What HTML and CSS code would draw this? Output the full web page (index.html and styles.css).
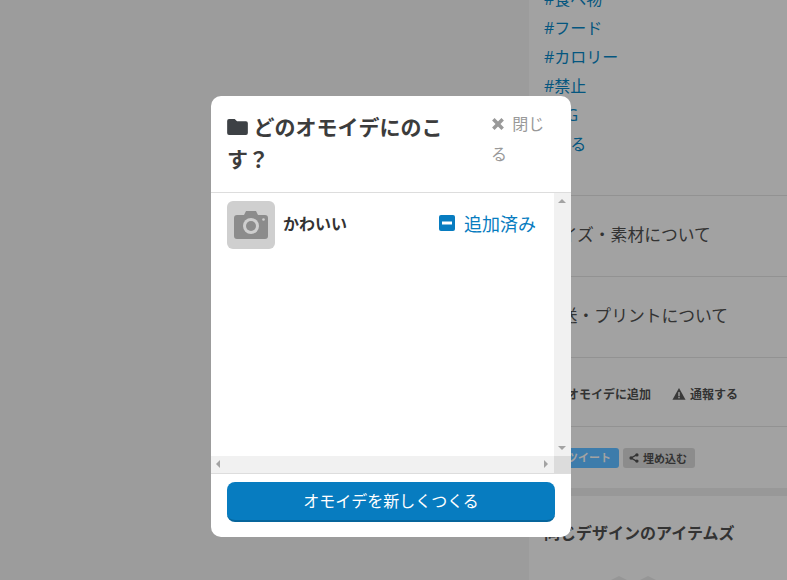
FILE: index.html
```html
<!DOCTYPE html>
<html lang="ja">
<head>
    <meta charset="UTF-8">
    <title>オモイデ</title>
    <link rel="stylesheet" href="styles.css">
</head>
<body>
    <div class="page">
        <div class="main"></div>
        <aside class="side">
            <ul class="tags">
                <li>#食べ物</li>
                <li>#フード</li>
                <li>#カロリー</li>
                <li>#禁止</li>
                <li>#NG</li>
                <li>#見る</li>
            </ul>
            <div class="side-row">サイズ・素材について</div>
            <div class="side-row">配送・プリントについて</div>
            <div class="side-actions">
                <span>オモイデに追加</span>
                <span class="report">
                    <svg class="report-icon" viewBox="0 0 16 16"><path d="M8 1.2 15.5 14.600H.5Z" fill="#3a3a3a"/><rect x="7.200" y="5.800" width="1.600" height="4.600" fill="#a1a1a1"/><rect x="7.200" y="11.200" width="1.600" height="1.700" fill="#a1a1a1"/></svg>
                    通報する
                </span>
            </div>
            <div class="side-share">
                <span class="tweet">ツイート</span>
                <span class="embed">
                    <svg class="embed-icon" viewBox="0 0 12 12"><path d="M9.500 2 2.500 6l7 4" fill="none" stroke="#333" stroke-width="1.500"/><circle cx="9.500" cy="2.300" r="2" fill="#333"/><circle cx="2.500" cy="6" r="2" fill="#333"/><circle cx="9.500" cy="9.700" r="2" fill="#333"/></svg>
                    埋め込む
                </span>
            </div>
            <div class="side-band"></div>
            <h3 class="side-title">同じデザインのアイテムズ</h3>
            <svg class="side-peek" viewBox="0 0 49 4"><path d="M0 4 8 0l8 4ZM29 4l8-4 8 4Z" fill="#969696"/></svg>
        </aside>
    </div>

    <div class="overlay">
        <div class="modal">
            <div class="modal-head">
                <h2 class="modal-title">
                    <svg class="folder" viewBox="0 0 22 17"><path d="M2 0h6l2.500 2.500H20a2 2 0 0 1 2 2V15a2 2 0 0 1-2 2H2a2 2 0 0 1-2-2V2a2 2 0 0 1 2-2Z" fill="#3d4145"/></svg>
                    どのオモイデにのこす？
                </h2>
                <div class="close">
                    <svg class="close-x" viewBox="0 0 12 12"><path d="M2 2l8 8M10 2l-8 8" fill="none" stroke="#999" stroke-width="3"/></svg>
                    閉じる
                </div>
            </div>
            <div class="modal-list">
                <div class="list-inner">
                    <div class="list-item">
                        <div class="thumb">
                            <svg class="camera" viewBox="0 0 34 28"><path d="M3 4h7l2-4h10l2 4h7a3 3 0 0 1 3 3v18a3 3 0 0 1-3 3H3a3 3 0 0 1-3-3V7a3 3 0 0 1 3-3Z" fill="#8c8c8c"/><circle cx="17" cy="15" r="8" fill="#cfcfcf"/><circle cx="17" cy="15" r="5" fill="#8c8c8c"/><circle cx="29.500" cy="8.500" r="1.300" fill="#cfcfcf"/></svg>
                        </div>
                        <span class="item-name">かわいい</span>
                        <span class="item-state">
                            <svg class="minus" viewBox="0 0 16 16"><rect width="16" height="16" rx="2" fill="#077cc0"/><rect x="3" y="6.500" width="10" height="3" fill="#fff"/></svg>
                            追加済み
                        </span>
                    </div>
                </div>
                <div class="scroll-v">
                    <span class="arrow arrow-up"></span>
                    <span class="arrow arrow-down"></span>
                </div>
                <div class="scroll-h">
                    <span class="arrow arrow-left"></span>
                    <span class="arrow arrow-right"></span>
                </div>
                <div class="scroll-corner"></div>
            </div>
            <div class="modal-foot">
                <button class="create-btn">オモイデを新しくつくる</button>
            </div>
        </div>
    </div>
</body>
</html>
```

FILE: styles.css
```css
html, body {
    margin: 0;
    padding: 0;
    height: 100%;
    overflow: hidden;
}

body {
    font-family: "Open Sans", "Noto Sans CJK JP", sans-serif;
    color: #333;
    background-color: #9c9c9c;
}

.page {
    display: flex;
    height: 580px;
    overflow: hidden;
}

.main {
    width: 529px;
    flex-shrink: 0;
}

.side {
    flex: 1;
    background-color: #a2a2a2;
}

.tags {
    list-style: none;
    margin: -15px 0 0;
    padding: 0 0 36px 15px;
    font-size: 16px;
    line-height: 29px;
    color: #04567f;
}

.side-row {
    border-top: 1px solid #929292;
    height: 80px;
    line-height: 78px;
    padding-left: 15px;
    font-size: 16.800px;
}

.side-actions {
    border-top: 1px solid #929292;
    height: 69px;
    display: flex;
    align-items: center;
    gap: 21px;
    padding: 3px 0 0 38px;
    box-sizing: border-box;
    font-size: 12px;
    font-weight: bold;
}

.report {
    display: flex;
    align-items: center;
    gap: 4px;
}

.report-icon {
    width: 14px;
    height: 14px;
}

.side-share {
    border-top: 1px solid #929292;
    height: 61px;
    display: flex;
    align-items: center;
    gap: 4px;
    padding-left: 15px;
    font-size: 11px;
    font-weight: bold;
}

.tweet {
    width: 75px;
    height: 20px;
    line-height: 20px;
    text-align: right;
    padding-right: 8px;
    box-sizing: border-box;
    border-radius: 3px;
    background-color: #3d7cab;
    color: #a2a2a2;
}

.embed {
    display: flex;
    align-items: center;
    gap: 4px;
    height: 20px;
    padding: 0 8px 0 6px;
    border-radius: 3px;
    background-color: #8c8c8c;
}

.embed-icon {
    width: 10px;
    height: 10px;
}

.side-band {
    height: 8px;
    background-color: #989898;
}

.side-title {
    margin: 0;
    padding: 25px 0 0 15px;
    font-size: 16px;
    line-height: 24px;
}

.side-peek {
    display: block;
    width: 49px;
    height: 4px;
    margin: 31px 0 0 82px;
}

.overlay {
    position: absolute;
    left: 211px;
    top: 96px;
}

.modal {
    width: 360px;
    height: 441px;
    display: flex;
    flex-direction: column;
    background-color: #fff;
    border-radius: 10px;
    overflow: hidden;
}

.modal-head {
    height: 96px;
    display: flex;
    justify-content: space-between;
    border-bottom: 1px solid #ddd;
    flex-shrink: 0;
}

.modal-title {
    width: 230px;
    margin: 15px 0 0 16px;
    font-size: 21px;
    line-height: 32px;
    font-weight: bold;
    color: #3c3c3c;
}

.folder {
    width: 21px;
    height: 16px;
}

.close {
    width: 64px;
    margin: 13px 16px 0 0;
    font-size: 16px;
    line-height: 30px;
    color: #999;
}

.close-x {
    width: 14px;
    height: 14px;
    margin-right: 3px;
    vertical-align: -1px;
}

.modal-list {
    position: relative;
    flex: 1;
    border-bottom: 1px solid #ddd;
}

.list-inner {
    padding: 8px 35px 0 16px;
}

.list-item {
    display: flex;
    align-items: center;
    height: 48px;
}

.thumb {
    width: 48px;
    height: 48px;
    display: flex;
    align-items: center;
    justify-content: center;
    border-radius: 6px;
    background-color: #cfcfcf;
}

.camera {
    width: 34px;
    height: 28px;
}

.item-name {
    margin: 0 0 4px 8px;
    font-size: 16px;
    font-weight: bold;
    flex: 1;
}

.item-state {
    display: flex;
    align-items: center;
    gap: 9px;
    margin-bottom: 4px;
    font-size: 18px;
    color: #077cc0;
}

.minus {
    width: 16px;
    height: 16px;
}

.scroll-v {
    position: absolute;
    top: 0;
    right: 0;
    bottom: 17px;
    width: 17px;
    background-color: #f1f1f1;
}

.scroll-h {
    position: absolute;
    left: 0;
    right: 17px;
    bottom: 0;
    height: 17px;
    background-color: #f1f1f1;
}

.scroll-corner {
    position: absolute;
    right: 0;
    bottom: 0;
    width: 17px;
    height: 17px;
    background-color: #dcdcdc;
}

.arrow {
    position: absolute;
    width: 0;
    height: 0;
    border-style: solid;
    border-color: transparent;
}

.arrow-up {
    top: 6px;
    left: 4px;
    border-width: 0 4px 4px;
    border-bottom-color: #a3a3a3;
}

.arrow-down {
    bottom: 6px;
    left: 4px;
    border-width: 4px 4px 0;
    border-top-color: #a3a3a3;
}

.arrow-left {
    left: 5px;
    top: 4px;
    border-width: 4px 4px 4px 0;
    border-right-color: #a3a3a3;
}

.arrow-right {
    right: 6px;
    top: 4px;
    border-width: 4px 0 4px 4px;
    border-left-color: #a3a3a3;
}

.modal-foot {
    height: 63px;
    padding: 8px 16px 0;
    box-sizing: border-box;
    flex-shrink: 0;
}

.create-btn {
    display: block;
    width: 328px;
    height: 40px;
    padding: 0 0 2px;
    border: none;
    border-bottom: 2px solid #06659c;
    border-radius: 8px;
    background-color: #077cc0;
    color: #fff;
    font-family: inherit;
    font-size: 16px;
}
```
